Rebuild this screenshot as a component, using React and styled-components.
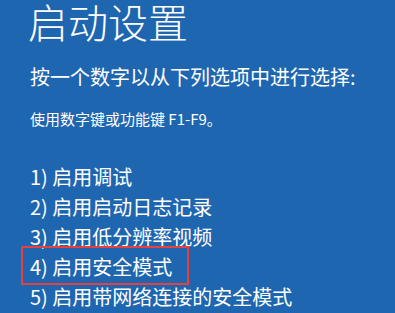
import React from 'react'
import styled, { createGlobalStyle } from 'styled-components'

const GlobalStyle = createGlobalStyle`
  html, body {
    margin: 0;
    padding: 0;
    background-color: #1f66b1;
  }
  body {
    font-family: "Noto Sans CJK SC", "Noto Sans", sans-serif;
    color: #ffffff;
  }
`

const Screen = styled.div`
  width: 395px;
  height: 313px;
  overflow: hidden;
  background-color: #1f66b1;
  padding: 1px 0 0 30px;
  box-sizing: border-box;
`

const Title = styled.h1`
  margin: 0 0 0 -2px;
  font-size: 40px;
  font-weight: 300;
  line-height: 40px;
`

const Prompt = styled.div`
  margin-top: 22px;
  font-size: 20px;
  line-height: 28px;
  font-weight: 400;
`

const Hint = styled.div`
  margin-top: 18px;
  font-size: 15px;
  line-height: 20px;
  font-weight: 400;
`

const Options = styled.ol`
  list-style: none;
  margin: 33px 0 0 0;
  padding: 0;
`

const Option = styled.li`
  font-size: 20px;
  font-weight: 400;
  line-height: 30px;
  position: relative;
`

const Highlight = styled.span`
  position: absolute;
  left: -9px;
  top: -6px;
  width: 168px;
  height: 39px;
  border: 2.5px solid #e8403c;
  box-sizing: border-box;
  pointer-events: none;
`

const options = [
  { key: 1, text: '启用调试' },
  { key: 2, text: '启用启动日志记录' },
  { key: 3, text: '启用低分辨率视频' },
  { key: 4, text: '启用安全模式', marked: true },
  { key: 5, text: '启用带网络连接的安全模式' },
]

export default function App() {
  return (
    <Screen>
      <GlobalStyle />
      <Title>启动设置</Title>
      <Prompt>按一个数字以从下列选项中进行选择:</Prompt>
      <Hint>使用数字键或功能键 F1-F9。</Hint>
      <Options>
        {options.map(({ key, text, marked }) => (
          <Option key={key}>
            {key}) {text}
            {marked && <Highlight />}
          </Option>
        ))}
      </Options>
    </Screen>
  )
}
